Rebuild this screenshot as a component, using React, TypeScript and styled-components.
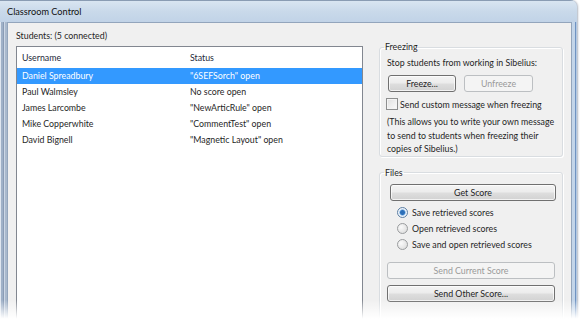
import React from 'react';
import styled, { createGlobalStyle } from 'styled-components';

const GlobalStyle = createGlobalStyle`
  html, body {
    margin: 0;
    padding: 0;
    background: #fff;
  }
  body {
    width: 580px;
    height: 322px;
    overflow: hidden;
    font-family: Lato, "Open Sans", sans-serif;
    font-size: 8.8px;
    color: #1f1f1f;
  }
`;

const Page = styled.div`
  position: relative;
  width: 580px;
  height: 322px;
  overflow: hidden;

  /* the screenshot fades out to white at the bottom */
  &::after {
    content: '';
    position: absolute;
    left: 0;
    right: 0;
    bottom: 0;
    height: 22px;
    background: linear-gradient(to bottom, rgba(255, 255, 255, 0), #fff 85%);
  }
`;

const Window = styled.div`
  width: 577px;
  height: 340px;
  display: flex;
  flex-direction: column;
  border-radius: 0 7px 0 0;
  overflow: hidden;
  background: #c2d4e8;
  box-shadow: 1px 0 2px rgba(30, 50, 80, 0.35);
`;

const TitleBar = styled.div`
  height: 22px;
  flex: none;
  box-sizing: border-box;
  display: flex;
  align-items: center;
  padding-left: 7px;
  border-top: 1px solid #8a9cb3;
  background: linear-gradient(to bottom, #d9e5f1 0%, #c9d9ea 50%, #c1d3e7 100%);
  color: #111;
  font-size: 9.2px;
`;

const Body = styled.div`
  flex: 1;
  display: flex;
  min-height: 0;
`;

const LeftFrame = styled.div`
  width: 7px;
  flex: none;
  background: linear-gradient(
    to right,
    #dfe6ef 0 1px,
    #9fb1c8 1px 3px,
    #8a9cb5 3px 4px,
    #ccd7e5 4px 5px,
    #a9b9cd 5px 7px
  );
`;

const RightFrame = styled.div`
  width: 5px;
  flex: none;
  background: linear-gradient(to right, #c3d5e9 0 3px, #6f93c2 3px 4px, #b4c9e2 4px 5px);
`;

const Client = styled.div`
  flex: 1;
  display: grid;
  grid-template-columns: 347px 184px;
  column-gap: 16px;
  align-items: start;
  padding: 7px 8px 0 8px;
  background: #f0f0f0;
  border: 1px solid #93a5bc;
  border-bottom: none;
`;

const LeftColumn = styled.div`
  display: flex;
  flex-direction: column;
`;

const Caption = styled.div`
  line-height: 12px;
  height: 12px;
`;

const ListBox = styled.div`
  margin-top: 4px;
  height: 300px;
  background: #fff;
  border: 1px solid #828790;
`;

const Row = styled.div<{ $selected?: boolean }>`
  display: grid;
  grid-template-columns: 168px 1fr;
  height: 16px;
  line-height: 16px;
  background: ${p => (p.$selected ? '#3399ff' : 'transparent')};
  color: ${p => (p.$selected ? '#fff' : '#1f1f1f')};
`;

const HeaderRow = styled(Row)`
  height: 20px;
  line-height: 20px;
  padding-top: 1px;
  color: #1e2a3a;
`;

const Cell = styled.div`
  padding-left: 5px;
  white-space: nowrap;
  overflow: hidden;
`;

const RightColumn = styled.div`
  display: flex;
  flex-direction: column;
`;

const GroupBox = styled.fieldset<{ $top: number }>`
  margin: ${p => p.$top}px 0 0 0;
  padding: 4px 6px 0 7px;
  border: 1px solid #d9dde1;
  border-radius: 3px;
  box-shadow: inset 1px 1px 0 #fff, 1px 1px 0 #fff;
  min-width: 0;
  display: flex;
  flex-direction: column;
`;

const Legend = styled.legend`
  margin-left: -3px;
  padding: 0 1px;
  line-height: 12px;
  height: 12px;
`;

const Text = styled.div`
  line-height: 12px;
  white-space: nowrap;
`;

const Note = styled.div`
  margin-top: 5px;
  line-height: 13.5px;
  white-space: nowrap;
`;

const ButtonRow = styled.div`
  display: flex;
  gap: 8px;
  margin-top: 6px;
  margin-left: 1px;
`;

const Button = styled.button<{ $w: number; $top?: number; $left?: number }>`
  width: ${p => p.$w}px;
  height: 17px;
  margin: ${p => p.$top ?? 0}px 0 0 ${p => p.$left ?? 0}px;
  padding: 0;
  box-sizing: border-box;
  font: inherit;
  color: #1f1f1f;
  border: 1px solid #707070;
  border-radius: 3px;
  background: linear-gradient(to bottom, #f4f4f4 0%, #ececec 48%, #dedede 52%, #d2d2d2 100%);
  box-shadow: inset 0 0 0 1px rgba(255, 255, 255, 0.7);

  &:disabled {
    color: #9a9a9a;
    border-color: #bcbfc2;
    background: #f4f4f4;
    box-shadow: none;
  }
`;

const Option = styled.label<{ $indent?: number }>`
  display: flex;
  align-items: center;
  gap: ${p => (p.$indent ? 4 : 2)}px;
  height: 16px;
  margin-left: ${p => p.$indent ?? 0}px;
  white-space: nowrap;
`;

const CheckRow = styled(Option)`
  margin-top: 6px;
  margin-left: -1px;
  height: 12px;
`;

const CheckBox = styled.span`
  width: 10px;
  height: 10px;
  flex: none;
  border: 1px solid #8e8f8f;
  background: linear-gradient(135deg, #e0e0e0, #fbfbfb);
  box-shadow: inset 0 0 0 1px #f4f4f4;
`;

const Radio = styled.span<{ $checked?: boolean }>`
  width: 9px;
  height: 9px;
  flex: none;
  border-radius: 50%;
  border: 1px solid ${p => (p.$checked ? '#5d7fa3' : '#9a9c9e')};
  background: ${p =>
    p.$checked
      ? 'radial-gradient(circle at 50% 50%, #2d6fb8 0 2px, #5a9ad8 2.5px, #eaf2fb 3.5px, #f7f7f7 100%)'
      : 'radial-gradient(circle at 35% 35%, #fafafa, #d8d8d8)'};
`;

const Radios = styled.div`
  display: flex;
  flex-direction: column;
  margin-top: 4px;
`;

const Spacer = styled.div`
  height: 30px;
`;

const students = [
  { name: 'Daniel Spreadbury', status: '"6SEFSorch" open' },
  { name: 'Paul Walmsley', status: 'No score open' },
  { name: 'James Larcombe', status: '"NewArticRule" open' },
  { name: 'Mike Copperwhite', status: '"CommentTest" open' },
  { name: 'David Bignell', status: '"Magnetic Layout" open' },
];

export default function App() {
  return (
    <>
      <GlobalStyle />
      <Page>
        <Window>
          <TitleBar>Classroom Control</TitleBar>
          <Body>
            <LeftFrame />
            <Client>
              <LeftColumn>
                <Caption>Students: (5 connected)</Caption>
                <ListBox>
                  <HeaderRow>
                    <Cell>Username</Cell>
                    <Cell>Status</Cell>
                  </HeaderRow>
                  {students.map((s, i) => (
                    <Row key={s.name} $selected={i === 0}>
                      <Cell>{s.name}</Cell>
                      <Cell>{s.status}</Cell>
                    </Row>
                  ))}
                </ListBox>
              </LeftColumn>
              <RightColumn>
                <GroupBox $top={11}>
                  <Legend>Freezing</Legend>
                  <Text>Stop students from working in Sibelius:</Text>
                  <ButtonRow>
                    <Button $w={68}>Freeze...</Button>
                    <Button $w={69} disabled>
                      Unfreeze
                    </Button>
                  </ButtonRow>
                  <CheckRow>
                    <CheckBox />
                    Send custom message when freezing
                  </CheckRow>
                  <Note>
                    (This allows you to write your own message
                    <br />
                    to send to students when freezing their
                    <br />
                    copies of Sibelius.)
                  </Note>
                </GroupBox>
                <GroupBox $top={10}>
                  <Legend>Files</Legend>
                  <Button $w={166} $left={3} $top={1}>
                    Get Score
                  </Button>
                  <Radios>
                    <Option $indent={10}>
                      <Radio $checked />
                      Save retrieved scores
                    </Option>
                    <Option $indent={10}>
                      <Radio />
                      Open retrieved scores
                    </Option>
                    <Option $indent={10}>
                      <Radio />
                      Save and open retrieved scores
                    </Option>
                  </Radios>
                  <Button $w={168} $top={9} disabled>
                    Send Current Score
                  </Button>
                  <Button $w={168} $top={6}>
                    Send Other Score...
                  </Button>
                  <Spacer />
                </GroupBox>
              </RightColumn>
            </Client>
            <RightFrame />
          </Body>
        </Window>
      </Page>
    </>
  );
}
